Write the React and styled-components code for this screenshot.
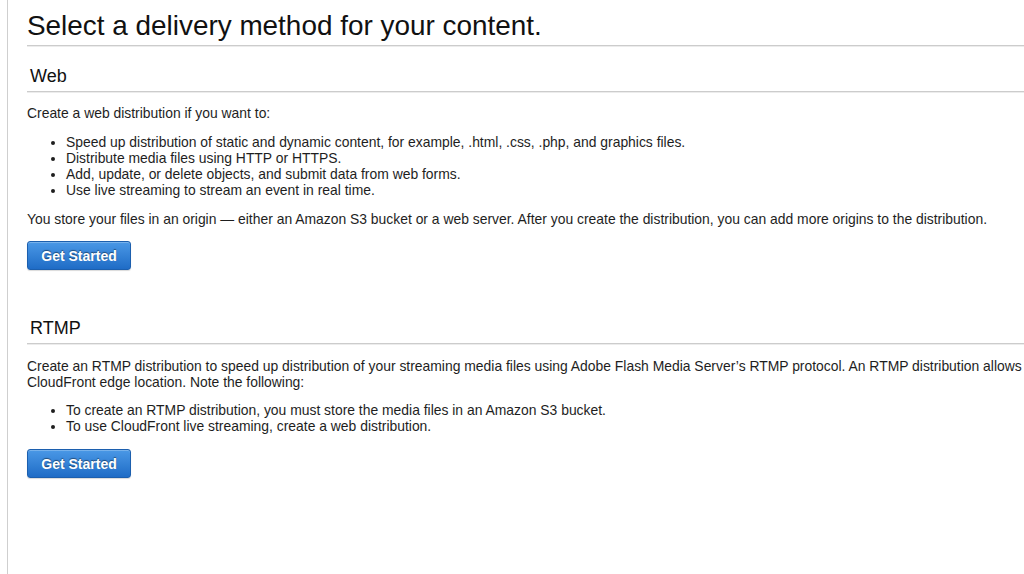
import React from "react";
import styled, { createGlobalStyle } from "styled-components";

const Global = createGlobalStyle`
  html, body { margin: 0; padding: 0; background: #fff; overflow: hidden; }
  body { font-family: "Liberation Sans", Arial, Helvetica, sans-serif; color: #1e1e1e; }
`;

const Frame = styled.div`
  margin-left: 7px;
  border-left: 1px solid #cfcfcf;
  padding: 0 0 0 19px;
  min-height: 574px;
  width: 1800px;
  box-sizing: border-box;
`;

const Title = styled.h1`
  margin: 0;
  padding: 10px 0 3px;
  font-size: 27.9px;
  font-weight: 400;
  line-height: 32px;
  color: #111;
  border-bottom: 1px solid #cccccc;
  box-shadow: 0 1px 0 #ececec;
`;

const Section = styled.section`
  padding-top: ${(p) => p.$top}px;
`;

const SectionTitle = styled.h2`
  margin: 0;
  padding: 0 0 4px 3px;
  font-size: 18px;
  font-weight: 400;
  line-height: 22px;
  color: #111;
  border-bottom: 1px solid #cccccc;
  box-shadow: 0 1px 0 #ececec;
`;

const Para = styled.p`
  margin: ${(p) => p.$mt || 0}px 0 0;
  font-size: 13.9px;
  line-height: 16px;
`;

const List = styled.ul`
  margin: ${(p) => p.$mt}px 0 0;
  padding-left: 39px;
  font-size: 13.9px;
  line-height: 16px;
`;

const Item = styled.li``;

const Button = styled.button`
  display: block;
  margin-top: ${(p) => p.$mt}px;
  width: 104px;
  height: 29px;
  border: 1px solid #1c5fae;
  border-radius: 3px;
  background: linear-gradient(#4a98e6, #1f6cc6);
  box-shadow: inset 0 1px 0 rgba(255, 255, 255, 0.25), 0 1px 1px rgba(0, 0, 0, 0.15);
  color: #fff;
  font-family: "Liberation Sans", Arial, sans-serif;
  font-size: 14px;
  font-weight: 700;
  text-shadow: 0 -1px 1px rgba(0, 0, 0, 0.45);
  padding: 0;
  cursor: pointer;
`;

export default function App() {
  return (
    <>
      <Global />
      <Frame>
        <Title>Select a delivery method for your content.</Title>
        <Section $top={19}>
          <SectionTitle>Web</SectionTitle>
          <Para $mt={13}>Create a web distribution if you want to:</Para>
          <List $mt={13}>
            <Item>Speed up distribution of static and dynamic content, for example, .html, .css, .php, and graphics files.</Item>
            <Item>Distribute media files using HTTP or HTTPS.</Item>
            <Item>Add, update, or delete objects, and submit data from web forms.</Item>
            <Item>Use live streaming to stream an event in real time.</Item>
          </List>
          <Para $mt={13}>
            You store your files in an origin — either an Amazon S3 bucket or a web server. After you create the distribution, you can add more origins to the distribution.
          </Para>
          <Button $mt={14}>Get Started</Button>
        </Section>
        <Section $top={47}>
          <SectionTitle>RTMP</SectionTitle>
          <Para $mt={14}>
            Create an RTMP distribution to speed up distribution of your streaming media files using Adobe Flash Media Server’s RTMP protocol. An RTMP distribution allows an end user to begin playing a media file before the file has finished downloading from a
            <br />
            CloudFront edge location. Note the following:
          </Para>
          <List $mt={12}>
            <Item>To create an RTMP distribution, you must store the media files in an Amazon S3 bucket.</Item>
            <Item>To use CloudFront live streaming, create a web distribution.</Item>
          </List>
          <Button $mt={15}>Get Started</Button>
        </Section>
      </Frame>
    </>
  );
}
